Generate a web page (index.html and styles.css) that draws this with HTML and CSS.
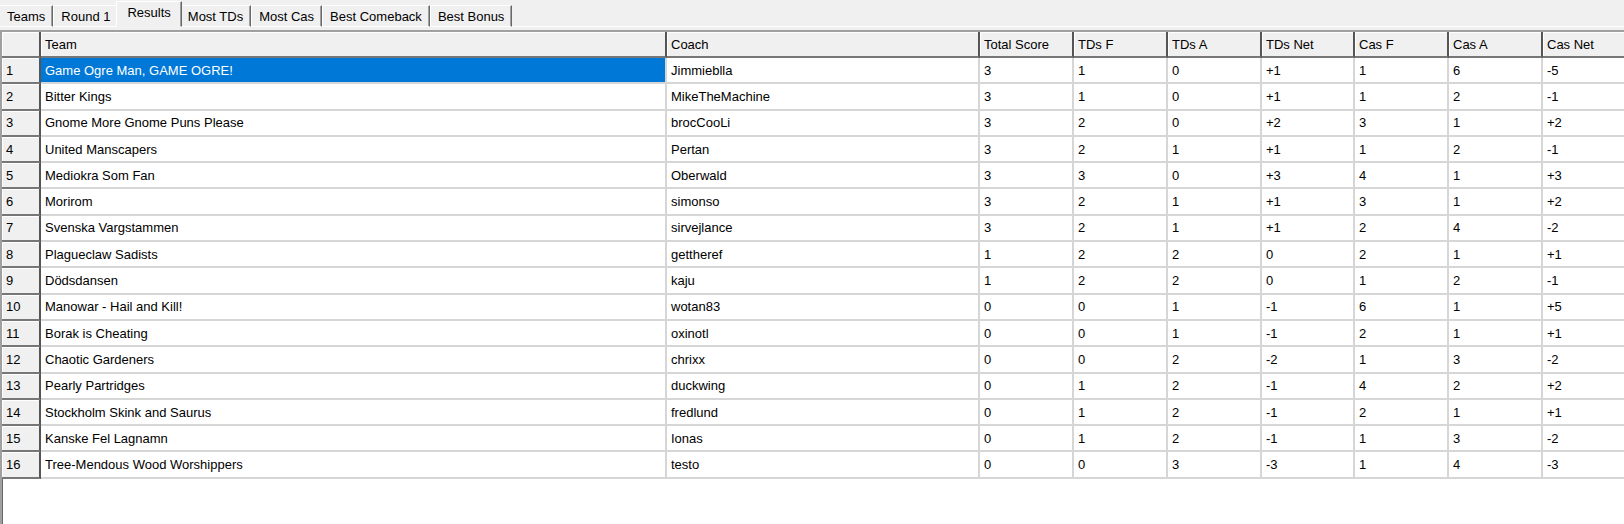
FILE: index.html
```html
<!DOCTYPE html>
<html lang="en">

<head>
    <meta charset="UTF-8">
    <meta name="viewport" content="width=device-width, initial-scale=1.0">
    <title>Results</title>
    <link rel="stylesheet" href="styles.css">
</head>

<body>
    <div class="tabs">
        <div class="tab first">Teams</div>
        <div class="tab">Round 1</div>
        <div class="tab active">Results</div>
        <div class="tab">Most TDs</div>
        <div class="tab">Most Cas</div>
        <div class="tab">Best Comeback</div>
        <div class="tab">Best Bonus</div>
    </div>

    <div class="panel">
        <div class="grid">
            <div class="cell fixed"></div>
            <div class="cell head">Team</div>
            <div class="cell head">Coach</div>
            <div class="cell head">Total Score</div>
            <div class="cell head">TDs F</div>
            <div class="cell head">TDs A</div>
            <div class="cell head">TDs Net</div>
            <div class="cell head">Cas F</div>
            <div class="cell head">Cas A</div>
            <div class="cell head">Cas Net</div>

            <div class="cell fixed">1</div>
            <div class="cell selected">Game Ogre Man, GAME OGRE!</div>
            <div class="cell">Jimmieblla</div>
            <div class="cell">3</div><div class="cell">1</div><div class="cell">0</div><div class="cell">+1</div>
            <div class="cell">1</div><div class="cell">6</div><div class="cell">-5</div>

            <div class="cell fixed">2</div>
            <div class="cell">Bitter Kings</div>
            <div class="cell">MikeTheMachine</div>
            <div class="cell">3</div><div class="cell">1</div><div class="cell">0</div><div class="cell">+1</div>
            <div class="cell">1</div><div class="cell">2</div><div class="cell">-1</div>

            <div class="cell fixed">3</div>
            <div class="cell">Gnome More Gnome Puns Please</div>
            <div class="cell">brocCooLi</div>
            <div class="cell">3</div><div class="cell">2</div><div class="cell">0</div><div class="cell">+2</div>
            <div class="cell">3</div><div class="cell">1</div><div class="cell">+2</div>

            <div class="cell fixed">4</div>
            <div class="cell">United Manscapers</div>
            <div class="cell">Pertan</div>
            <div class="cell">3</div><div class="cell">2</div><div class="cell">1</div><div class="cell">+1</div>
            <div class="cell">1</div><div class="cell">2</div><div class="cell">-1</div>

            <div class="cell fixed">5</div>
            <div class="cell">Mediokra Som Fan</div>
            <div class="cell">Oberwald</div>
            <div class="cell">3</div><div class="cell">3</div><div class="cell">0</div><div class="cell">+3</div>
            <div class="cell">4</div><div class="cell">1</div><div class="cell">+3</div>

            <div class="cell fixed">6</div>
            <div class="cell">Morirom</div>
            <div class="cell">simonso</div>
            <div class="cell">3</div><div class="cell">2</div><div class="cell">1</div><div class="cell">+1</div>
            <div class="cell">3</div><div class="cell">1</div><div class="cell">+2</div>

            <div class="cell fixed">7</div>
            <div class="cell">Svenska Vargstammen</div>
            <div class="cell">sirvejlance</div>
            <div class="cell">3</div><div class="cell">2</div><div class="cell">1</div><div class="cell">+1</div>
            <div class="cell">2</div><div class="cell">4</div><div class="cell">-2</div>

            <div class="cell fixed">8</div>
            <div class="cell">Plagueclaw Sadists</div>
            <div class="cell">gettheref</div>
            <div class="cell">1</div><div class="cell">2</div><div class="cell">2</div><div class="cell">0</div>
            <div class="cell">2</div><div class="cell">1</div><div class="cell">+1</div>

            <div class="cell fixed">9</div>
            <div class="cell">Dödsdansen</div>
            <div class="cell">kaju</div>
            <div class="cell">1</div><div class="cell">2</div><div class="cell">2</div><div class="cell">0</div>
            <div class="cell">1</div><div class="cell">2</div><div class="cell">-1</div>

            <div class="cell fixed">10</div>
            <div class="cell">Manowar - Hail and Kill!</div>
            <div class="cell">wotan83</div>
            <div class="cell">0</div><div class="cell">0</div><div class="cell">1</div><div class="cell">-1</div>
            <div class="cell">6</div><div class="cell">1</div><div class="cell">+5</div>

            <div class="cell fixed">11</div>
            <div class="cell">Borak is Cheating</div>
            <div class="cell">oxinotl</div>
            <div class="cell">0</div><div class="cell">0</div><div class="cell">1</div><div class="cell">-1</div>
            <div class="cell">2</div><div class="cell">1</div><div class="cell">+1</div>

            <div class="cell fixed">12</div>
            <div class="cell">Chaotic Gardeners</div>
            <div class="cell">chrixx</div>
            <div class="cell">0</div><div class="cell">0</div><div class="cell">2</div><div class="cell">-2</div>
            <div class="cell">1</div><div class="cell">3</div><div class="cell">-2</div>

            <div class="cell fixed">13</div>
            <div class="cell">Pearly Partridges</div>
            <div class="cell">duckwing</div>
            <div class="cell">0</div><div class="cell">1</div><div class="cell">2</div><div class="cell">-1</div>
            <div class="cell">4</div><div class="cell">2</div><div class="cell">+2</div>

            <div class="cell fixed">14</div>
            <div class="cell">Stockholm Skink and Saurus</div>
            <div class="cell">fredlund</div>
            <div class="cell">0</div><div class="cell">1</div><div class="cell">2</div><div class="cell">-1</div>
            <div class="cell">2</div><div class="cell">1</div><div class="cell">+1</div>

            <div class="cell fixed">15</div>
            <div class="cell">Kanske Fel Lagnamn</div>
            <div class="cell">Ionas</div>
            <div class="cell">0</div><div class="cell">1</div><div class="cell">2</div><div class="cell">-1</div>
            <div class="cell">1</div><div class="cell">3</div><div class="cell">-2</div>

            <div class="cell fixed">16</div>
            <div class="cell">Tree-Mendous Wood Worshippers</div>
            <div class="cell">testo</div>
            <div class="cell">0</div><div class="cell">0</div><div class="cell">3</div><div class="cell">-3</div>
            <div class="cell">1</div><div class="cell">4</div><div class="cell">-3</div>
        </div>
    </div>
</body>

</html>
```

FILE: styles.css
```css
* {
    margin: 0;
    padding: 0;
    box-sizing: border-box;
}

body {
    width: 1624px;
    height: 524px;
    overflow: hidden;
    background-color: #f0f0f0;
    font-family: "Liberation Sans", Arial, sans-serif;
    font-size: 13px;
    color: #000000;
}

/* tab strip */
.tabs {
    display: flex;
    align-items: flex-end;
    height: 27px;
    border-bottom: 1px solid #ffffff;
}

.tab {
    display: flex;
    align-items: center;
    height: 22px;
    padding: 0 7px;
    margin-bottom: -1px;
    border-top: 1px solid #ffffff;
    border-left: 1px solid #ffffff;
    border-right: 1px solid #696969;
    box-shadow: inset -1px 0 0 #a0a0a0;
    border-bottom: 1px solid #ffffff;
    background-color: #f0f0f0;
    white-space: nowrap;
}

.tab.first {
    padding-left: 6px;
    border-left-color: #f0f0f0;
}

.tab.active {
    position: relative;
    z-index: 1;
    height: 26px;
    margin: 0 -2px -1px -2px;
    padding: 0 10px 3px 10px;
    border-bottom-color: #f0f0f0;
}

/* grid */
.panel {
    padding-top: 3px;
}

.grid {
    display: grid;
    grid-template-columns: 39px 626px 313px 94px 94px 94px 93px 94px 94px 94px;
    grid-template-rows: 26px;
    grid-auto-rows: 26.3px;
    width: 1640px;
    height: 500px;
    align-content: start;
    background-color: #ffffff;
    border-top: 2px solid #a0a0a0;
    border-left: 2px solid #a0a0a0;
    box-shadow: inset 1px 1px 0 #696969;
}

.cell {
    display: flex;
    align-items: center;
    padding-left: 4px;
    border-right: 2px solid #d6d6d6;
    border-bottom: 2px solid #d6d6d6;
    white-space: nowrap;
    overflow: hidden;
}

.cell.head,
.cell.fixed {
    background-color: #f0f0f0;
    border-right-color: #555555;
    border-bottom-color: #777777;
    box-shadow: inset 1px 1px 0 #ffffff;
}

.cell.selected {
    background-color: #0078d7;
    color: #ffffff;
}
```
